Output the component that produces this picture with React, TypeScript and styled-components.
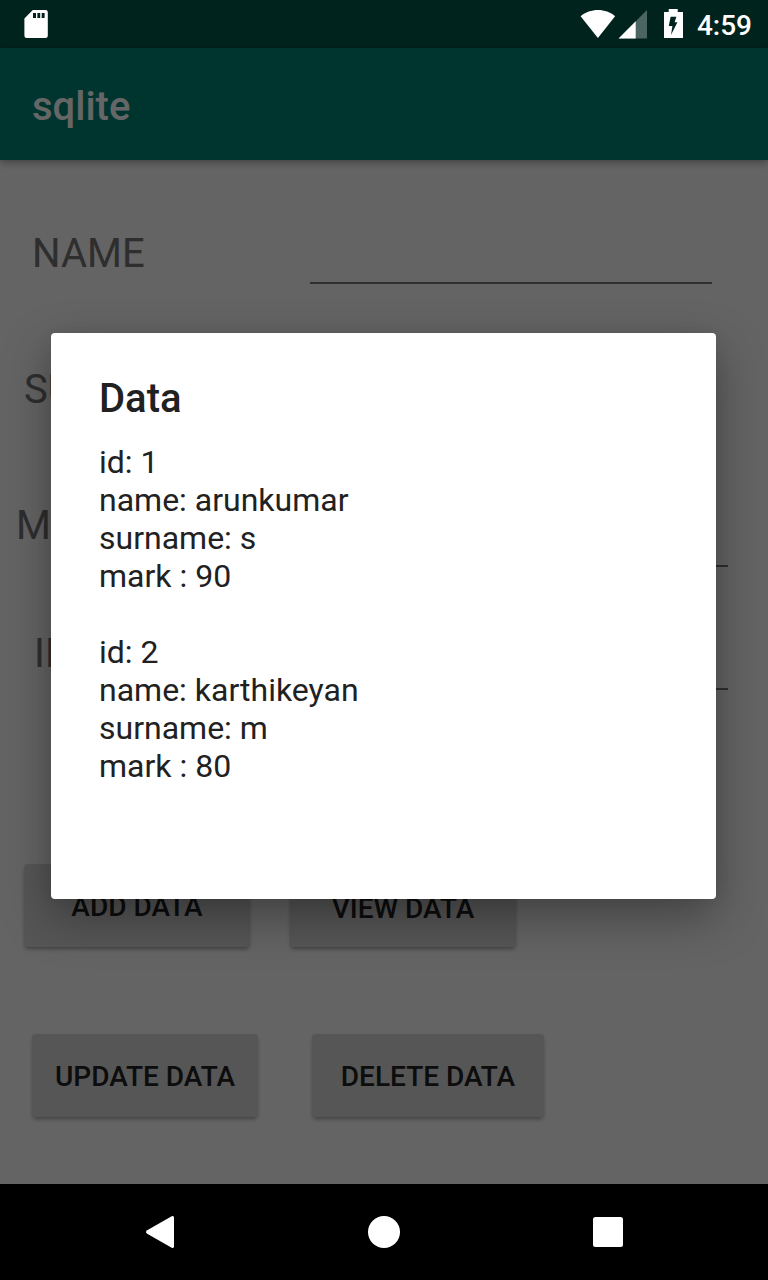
import React from 'react';
import styled, { createGlobalStyle } from 'styled-components';

const GlobalStyle = createGlobalStyle`
  body {
    margin: 0;
    background: #000;
    font-family: Roboto, "Liberation Sans", sans-serif;
  }
  *, *::before, *::after { box-sizing: border-box; }
`;

const Phone = styled.div`
  position: relative;
  display: flex;
  flex-direction: column;
  width: 768px;
  height: 1280px;
  overflow: hidden;
`;

const StatusBar = styled.header`
  display: flex;
  flex: none;
  align-items: center;
  height: 48px;
  padding: 0 16px 0 24px;
  background: #00231e;
  color: #fff;
`;

const StatusIcons = styled.div`
  display: flex;
  align-items: center;
  margin-left: auto;
`;

const Clock = styled.time`
  margin-left: 13px;
  padding-top: 3px;
  font-size: 28px;
  font-weight: 500;
  line-height: 33px;
`;

const Activity = styled.main`
  display: flex;
  flex: 1;
  flex-direction: column;
  min-height: 0;
  background: #fafafa;
`;

const AppBar = styled.div`
  display: flex;
  flex: none;
  align-items: center;
  height: 112px;
  padding: 4px 32px 0;
  background: #008577;
  box-shadow: 0 2px 8px rgba(0, 0, 0, 0.38);
`;

const AppTitle = styled.h1`
  margin: 0;
  color: #fff;
  font-size: 40px;
  font-weight: 500;
  line-height: 47px;
`;

const Form = styled.form`
  display: flex;
  flex-direction: column;
  padding-top: 70px;
`;

const FieldRow = styled.div<{ $height: number; $left: number; $right: number }>`
  display: flex;
  align-items: flex-start;
  justify-content: space-between;
  height: ${(p) => p.$height}px;
  padding-left: ${(p) => p.$left}px;
  padding-right: ${(p) => p.$right}px;
`;

const FieldLabel = styled.label`
  color: #737373;
  font-size: 40px;
  line-height: 47px;
`;

const FieldLine = styled.span<{ $drop: number }>`
  width: 402px;
  height: ${(p) => p.$drop}px;
  border-bottom: 2px solid #757575;
`;

const ButtonRow = styled.div<{ $height: number; $left: number; $gap: number }>`
  display: flex;
  align-items: flex-end;
  height: ${(p) => p.$height}px;
  padding-left: ${(p) => p.$left}px;
  gap: ${(p) => p.$gap}px;
`;

const Button = styled.button<{ $width: number; $height?: number }>`
  width: ${(p) => p.$width}px;
  height: ${(p) => p.$height ?? 83}px;
  padding: 2px 0 0;
  border: 0;
  border-radius: 4px;
  background: #d6d7d7;
  box-shadow: 0 3px 4px -1px rgba(0, 0, 0, 0.35), 0 0 2px rgba(0, 0, 0, 0.06);
  color: #212121;
  font: 500 28px/33px Roboto, sans-serif;
  text-transform: uppercase;
`;

const Scrim = styled.div`
  position: absolute;
  inset: 48px 0 96px;
  display: flex;
  align-items: center;
  justify-content: center;
  padding-right: 1px;
  background: rgba(0, 0, 0, 0.6);
`;

const Dialog = styled.section`
  width: 665px;
  height: 566px;
  padding: 42px 48px;
  border-radius: 4px;
  background: #fff;
  box-shadow: 0 18px 48px rgba(0, 0, 0, 0.34), 0 0 16px rgba(0, 0, 0, 0.06);
  color: #212121;
`;

const DialogTitle = styled.h2`
  margin: 0 0 21px;
  font-size: 40px;
  font-weight: 500;
  line-height: 47px;
`;

const Entry = styled.p`
  margin: 0 0 38px;
  font-size: 32px;
  line-height: 38px;
`;

const NavBar = styled.nav`
  display: flex;
  flex: none;
  align-items: center;
  justify-content: center;
  gap: 176px;
  height: 96px;
  background: #000;
`;

const fields = [
  { label: 'NAME', height: 136, left: 32, right: 56, drop: 54 },
  { label: 'SURNAME', height: 136, left: 24, right: 56, drop: 54 },
  { label: 'MARK', height: 128, left: 16, right: 40, drop: 65 },
  { label: 'ID', height: 234, left: 34, right: 40, drop: 60 },
];

const records = [
  { id: 1, name: 'arunkumar', surname: 's', mark: 90 },
  { id: 2, name: 'karthikeyan', surname: 'm', mark: 80 },
];

export default function App() {
  return (
    <>
      <GlobalStyle />
      <Phone>
        <StatusBar>
          <svg width="24" height="30" viewBox="0 0 24 30" fill="#fff">
            <path
              fillRule="evenodd"
              d="M8.8 1H21.5A2.3 2.3 0 0 1 23.8 3.3V26.7A2.3 2.3 0 0 1 21.5 29H2.7A2.3 2.3 0 0 1 .4 26.7V9.4ZM9 4V9H12V4ZM13.4 4V9H16.2V4ZM17.7 4V9H20.6V4Z"
            />
          </svg>
          <StatusIcons>
            <svg width="104" height="32" viewBox="0 0 104 32" fill="#fff">
              <path d="M.6 8.3C10-.1 26 -.1 35.1 8.3L17.9 30Z" />
              <path d="M67 2V30.4H38.6Z" opacity=".3" />
              <path d="M55.7 13.3V30.4H38.6Z" />
              <path
                fillRule="evenodd"
                d="M88.7 1H97.7V4H103V30H84V4H88.7ZM90.6 8.7L88.8 18H92.4L91 27L97.4 14.2H94.6L96.4 8.7Z"
              />
            </svg>
            <Clock>4:59</Clock>
          </StatusIcons>
        </StatusBar>
        <Activity>
          <AppBar>
            <AppTitle>sqlite</AppTitle>
          </AppBar>
          <Form>
            {fields.map((f) => (
              <FieldRow key={f.label} $height={f.height} $left={f.left} $right={f.right}>
                <FieldLabel>{f.label}</FieldLabel>
                <FieldLine $drop={f.drop} />
              </FieldRow>
            ))}
            <ButtonRow $height={83} $left={24} $gap={40}>
              <Button type="button" $width={226}>Add data</Button>
              <Button type="button" $width={226} $height={79}>View data</Button>
            </ButtonRow>
            <ButtonRow $height={170} $left={32} $gap={54}>
              <Button type="button" $width={226}>Update data</Button>
              <Button type="button" $width={232}>Delete data</Button>
            </ButtonRow>
          </Form>
        </Activity>
        <NavBar>
          <svg width="48" height="48" viewBox="0 0 48 48" fill="#fff">
            <path d="M11.2 22.2L35.7 8.3Q38 7.3 38 9.8V38.2Q38 40.7 35.7 39.7L11.2 25.8Q8.8 24 11.2 22.2Z" />
          </svg>
          <svg width="48" height="48" viewBox="0 0 48 48" fill="#fff">
            <circle cx="24" cy="24" r="16" />
          </svg>
          <svg width="48" height="48" viewBox="0 0 48 48" fill="#fff">
            <rect x="9" y="9" width="30" height="30" rx="2.5" />
          </svg>
        </NavBar>
        <Scrim>
          <Dialog role="dialog">
            <DialogTitle>Data</DialogTitle>
            {records.map((r) => (
              <Entry key={r.id}>
                id: {r.id}
                <br />
                name: {r.name}
                <br />
                surname: {r.surname}
                <br />
                mark : {r.mark}
              </Entry>
            ))}
          </Dialog>
        </Scrim>
      </Phone>
    </>
  );
}
